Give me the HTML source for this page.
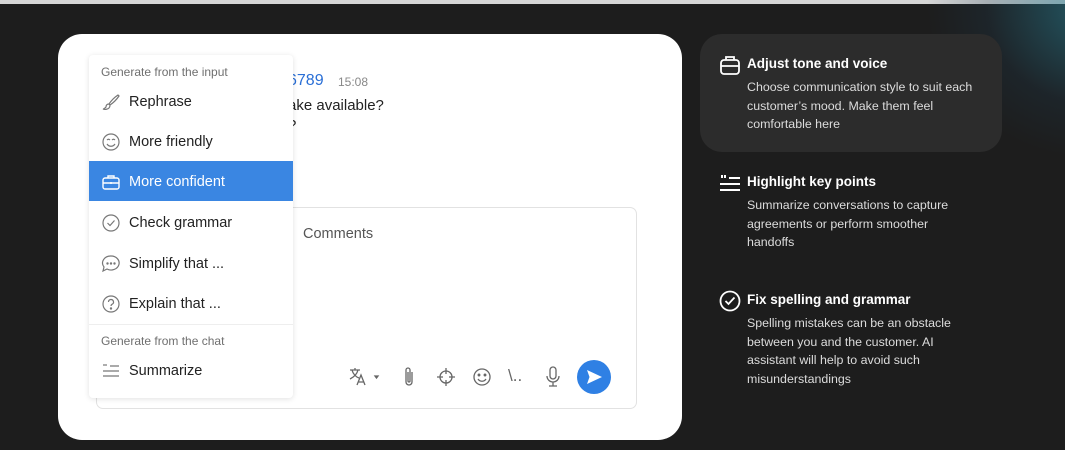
<!DOCTYPE html>
<html><head><meta charset="utf-8"><style>
*{margin:0;padding:0;box-sizing:border-box}
body{width:1065px;height:450px;overflow:hidden;background:#1d1d1d;font-family:"Liberation Sans",sans-serif;position:relative}
.top{position:absolute;left:0;top:0;width:1065px;height:4px;background:#d6d6d6}
.glow{position:absolute;right:-60px;top:-20px;width:200px;height:180px;background:radial-gradient(ellipse at 85% 15%,rgba(40,130,150,.6),rgba(30,60,80,.25) 45%,rgba(29,29,29,0) 70%)}
.card{position:absolute;left:58px;top:34px;width:624px;height:406px;background:#fff;border-radius:24px}
.abs{position:absolute}
.menu{position:absolute;left:89px;top:55px;width:204px;height:343px;background:#fff;box-shadow:0 1px 6px rgba(0,0,0,.12);border-radius:4px}
.hdr{position:absolute;left:12px;font-size:12px;color:#6f6f6f}
.item{position:absolute;left:0;width:204px;height:40px;font-size:14.5px;color:#222;display:flex;align-items:center;padding-left:12px;padding-top:2px}
.item svg{width:20px;height:20px;margin-right:8px;flex:none}
.sel{background:#3a86e2;color:#fff}
.input{position:absolute;left:96px;top:207px;width:541px;height:202px;border:1px solid #e2e2e2;border-radius:7px}
.rt{position:absolute;left:747px;color:#fff;font-weight:bold;font-size:13.5px}
.rb{position:absolute;left:747px;color:#dcdcdc;font-size:12.4px;line-height:18.5px;width:260px;white-space:nowrap}
.tb svg{position:absolute}
</style></head><body>
<div class="top"></div>
<div class="glow"></div>
<div class="card"></div>
<div class="abs" style="left:288px;top:72px;font-size:16px;color:#2a6fd6">6789</div>
<div class="abs" style="left:338px;top:75px;font-size:12px;color:#888">15:08</div>
<div class="abs" style="left:288px;top:97px;font-size:15px;color:#222">ake available?</div>
<div class="abs" style="left:288px;top:117px;font-size:15px;color:#222">?</div>
<div class="input"></div>
<div class="abs" style="left:303px;top:226px;font-size:14.5px;color:#555">Comments</div>
<div class="tb">
<svg style="left:348px;top:366px" width="36" height="22" viewBox="0 0 36 22" fill="none" stroke="#666" stroke-width="1.3"><path d="M2 4h10M7 2v2M4 4c1 4 4 7 7 8M10 4c-1 4-4 7-8 9M9 19l4-10 4 10M10.5 16h5"/><path d="M27 10l3 0-1.5 2z" fill="#666"/></svg>
<svg style="left:401px;top:366px" width="16" height="22" viewBox="0 0 16 22" fill="none" stroke="#666" stroke-width="1.3"><path d="M11 6v10a3 3 0 0 1-6 0V4a2 2 0 0 1 4 0v11a1 1 0 0 1-2 0V6"/></svg>
<svg style="left:436px;top:367px" width="20" height="20" viewBox="0 0 20 20" fill="none" stroke="#666" stroke-width="1.3"><circle cx="10" cy="10" r="6"/><path d="M10 1v6M10 13v6M1 10h6M13 10h6"/></svg>
<svg style="left:472px;top:367px" width="20" height="20" viewBox="0 0 20 20" fill="none" stroke="#666" stroke-width="1.3"><circle cx="10" cy="10" r="8"/><path d="M6 12c2 3 6 3 8 0"/><circle cx="7" cy="8" r=".8" fill="#666"/><circle cx="13" cy="8" r=".8" fill="#666"/></svg>
<div class="abs" style="left:508px;top:366px;font-size:17px;color:#666">\..</div>
<svg style="left:543px;top:365px" width="20" height="24" viewBox="0 0 20 24" fill="none" stroke="#666" stroke-width="1.3"><rect x="7" y="2" width="6" height="12" rx="3"/><path d="M4 11a6 6 0 0 0 12 0M10 17v4M6 21h8"/></svg>
<div class="abs" style="left:577px;top:360px;width:34px;height:34px;border-radius:50%;background:#2f80e4"></div>
<svg style="left:585px;top:368px" width="18" height="18" viewBox="0 0 18 18"><path d="M2 2l15 7-15 7 2.5-7z" fill="#fff"/></svg>
</div>
<div class="menu">
<div class="hdr" style="top:10px">Generate from the input</div>
<div class="item" style="top:26px"><svg viewBox="0 0 20 20" fill="none" stroke="#777" stroke-width="1.2"><path d="M17 3c-3 2-7 6-9 9l1 1c3-2 7-6 9-9zM8 12c-2 0-3 1-3 3-1 1-2 2-3 2 2 1 5 0 6-1 1-1 1-2 1-3"/></svg>Rephrase</div>
<div class="item" style="top:66px"><svg viewBox="0 0 20 20" fill="none" stroke="#777" stroke-width="1.2"><circle cx="10" cy="10" r="8"/><path d="M6 12c2 3 6 3 8 0M6 8c1-1 2-1 3 0M11 8c1-1 2-1 3 0"/></svg>More friendly</div>
<div class="item sel" style="top:106px;height:40px;border-radius:0"><svg viewBox="0 0 20 20" fill="none" stroke="#fff" stroke-width="1.4"><rect x="2" y="6" width="16" height="11" rx="2"/><path d="M7 6V4h6v2M2 11h16M10 10v2"/></svg>More confident</div>
<div class="item" style="top:147px"><svg viewBox="0 0 20 20" fill="none" stroke="#777" stroke-width="1.2"><circle cx="10" cy="10" r="8"/><path d="M6.5 10l2.5 2.5 4.5-5"/></svg>Check grammar</div>
<div class="item" style="top:188px"><svg viewBox="0 0 20 20" fill="none" stroke="#777" stroke-width="1.2"><path d="M10 2a8 7 0 1 1-4 13l-4 2 1-4A8 7 0 0 1 10 2z"/><circle cx="6.5" cy="9.5" r=".6" fill="#777"/><circle cx="10" cy="9.5" r=".6" fill="#777"/><circle cx="13.5" cy="9.5" r=".6" fill="#777"/></svg>Simplify that ...</div>
<div class="item" style="top:228px"><svg viewBox="0 0 20 20" fill="none" stroke="#777" stroke-width="1.2"><circle cx="10" cy="10" r="8"/><path d="M7.5 8a2.5 2.5 0 1 1 3.5 2.3c-.7.4-1 .8-1 1.7"/><circle cx="10" cy="14.5" r=".6" fill="#777"/></svg>Explain that ...</div>
<div class="abs" style="left:0;top:269px;width:204px;height:1px;background:#eee"></div>
<div class="hdr" style="top:279px">Generate from the chat</div>
<div class="item" style="top:295px"><svg viewBox="0 0 20 20" fill="none" stroke="#777" stroke-width="1.2"><path d="M9 5h9M2 10h16M2 15h16M3 3v2M5 3v2"/></svg>Summarize</div>
</div>

<div class="abs" style="left:700px;top:34px;width:302px;height:118px;background:#2c2c2c;border-radius:22px"></div>
<svg class="abs" style="left:719px;top:54px" width="22" height="22" viewBox="0 0 22 22" fill="none" stroke="#fff" stroke-width="1.8"><rect x="2" y="6" width="18" height="14" rx="3"/><path d="M7 6V3h8v3M2 12h18"/></svg>
<div class="rt" style="top:56px">Adjust tone and voice</div>
<div class="rb" style="top:78px">Choose communication style to suit each<br>customer’s mood. Make them feel<br>comfortable here</div>
<svg class="abs" style="left:719px;top:173px" width="22" height="20" viewBox="0 0 22 20" fill="none" stroke="#fff" stroke-width="2"><path d="M10 5h11M1 11h20M1 17h20M3 2v3M6 2v3"/></svg>
<div class="rt" style="top:174px">Highlight key points</div>
<div class="rb" style="top:196px">Summarize conversations to capture<br>agreements or perform smoother<br>handoffs</div>
<svg class="abs" style="left:719px;top:290px" width="22" height="22" viewBox="0 0 22 22" fill="none" stroke="#fff" stroke-width="1.8"><circle cx="11" cy="11" r="9.5"/><path d="M6.5 11l3 3 6-6.5"/></svg>
<div class="rt" style="top:292px">Fix spelling and grammar</div>
<div class="rb" style="top:314px">Spelling mistakes can be an obstacle<br>between you and the customer. AI<br>assistant will help to avoid such<br>misunderstandings</div>
</body></html>
